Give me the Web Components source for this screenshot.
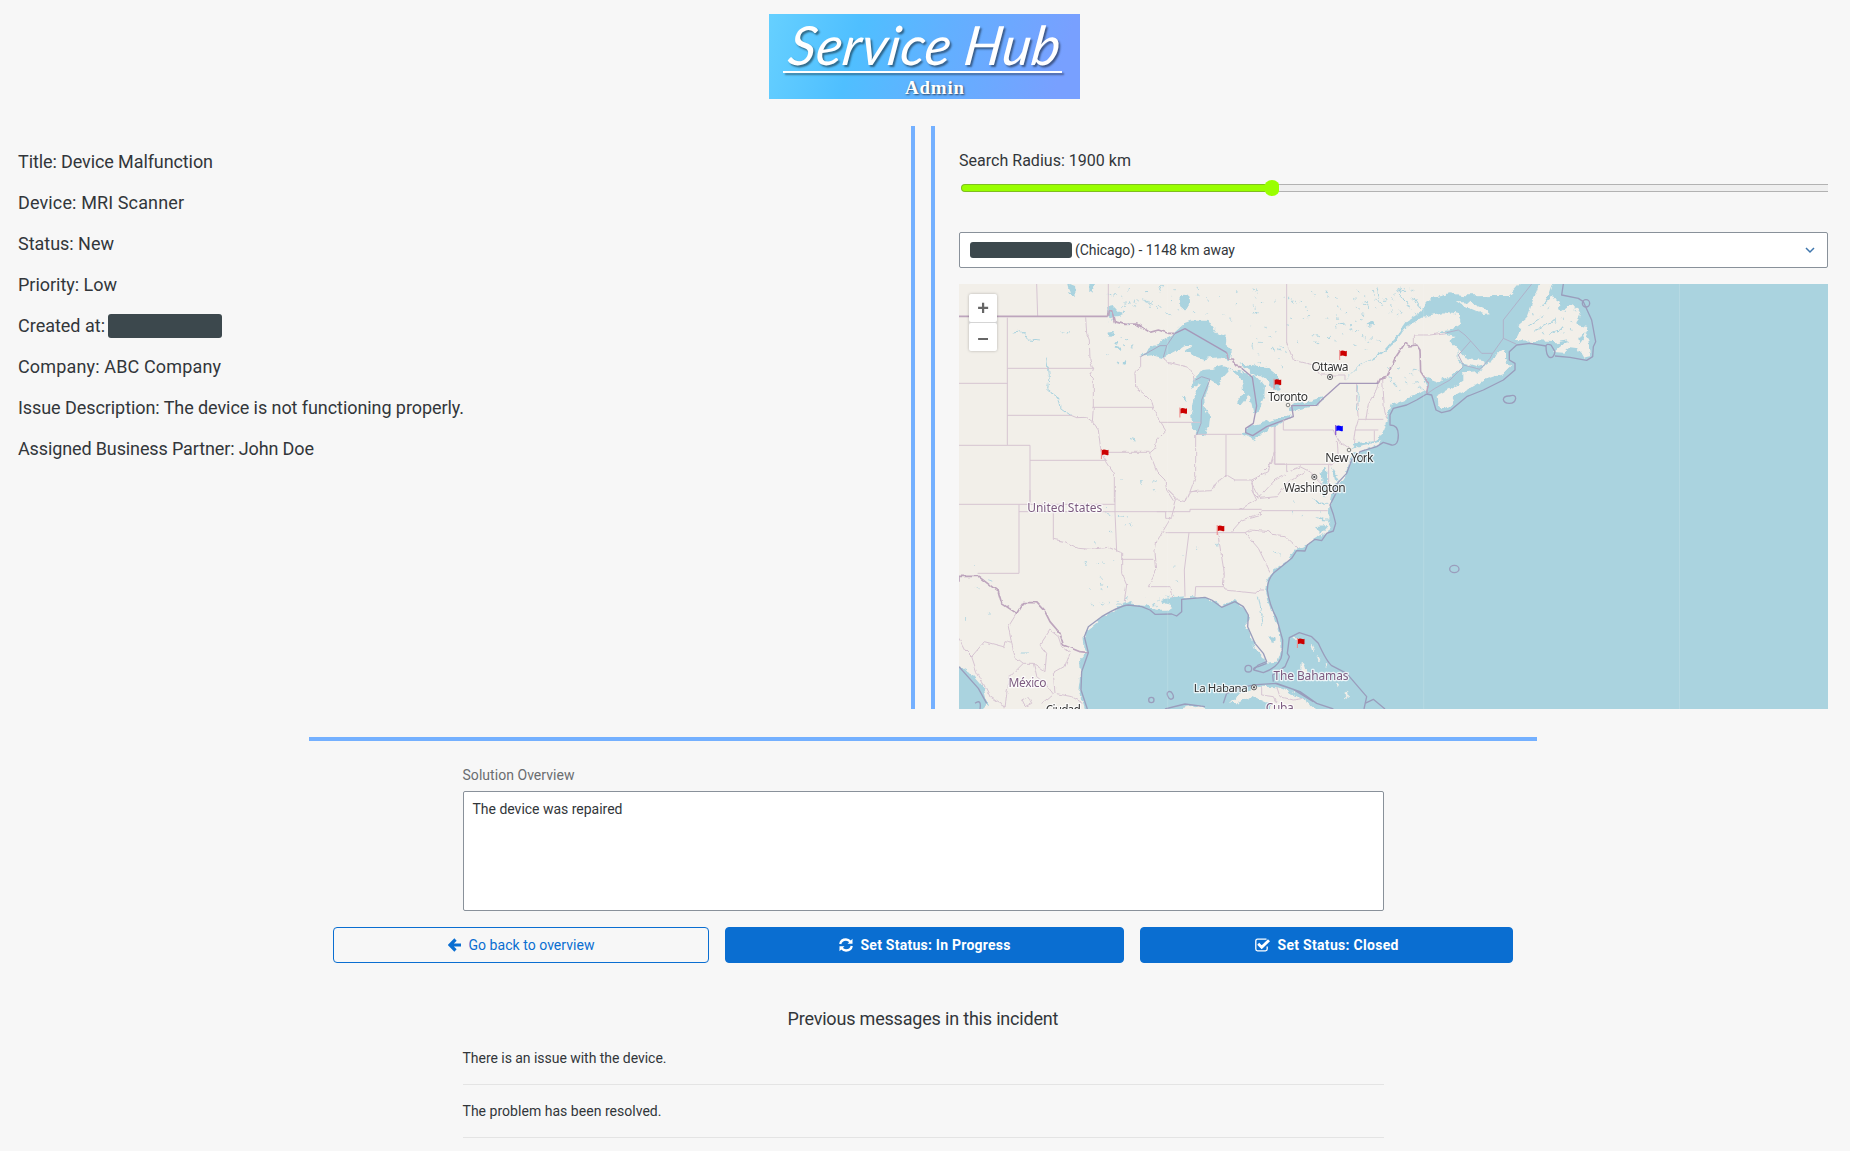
<!DOCTYPE html>
<html lang="en">
<head>
<meta charset="utf-8">
<title>Service Hub Admin</title>
<style>
  body { margin: 0; background: #f7f7f7; color: #32363a; font-family: Roboto, "Liberation Sans", sans-serif; }
</style>
</head>
<body>
<service-page></service-page>

<script>
const define = (name, html, setup) => {
  const template = document.createElement('template');
  template.innerHTML = html;
  customElements.define(name, class extends HTMLElement {
    connectedCallback() {
      if (this.shadowRoot) return;
      this.attachShadow({ mode: 'open' }).append(template.content.cloneNode(true));
      if (setup) setup.call(this, this.shadowRoot);
    }
  });
};

/* A single line of text tracked so that it fills the given width. */
define('fit-text', `<style>:host{display:inline-block;white-space:nowrap;vertical-align:top}span{display:inline-block;vertical-align:top}</style><span><slot></slot></span>`, function (root) {
  const span = root.querySelector('span');
  const want = +this.getAttribute('width');
  const chars = this.textContent.length;
  const natural = span.getBoundingClientRect().width;
  span.style.letterSpacing = ((want - natural) / (chars - 1)).toFixed(3) + 'px';
  this.style.width = want + 'px';
});

define('hub-logo', `
  <style>
    :host{display:flex;flex-direction:column;align-items:center;width:311px;height:85px;color:#fff;overflow:hidden;
      background:linear-gradient(105deg,#66d0ff 0%,#4fbfff 28%,#62b0ff 55%,#78a0ff 92%)}
    .name{font:italic 400 54px/62px Lato,sans-serif;height:57px;text-shadow:2px 2px 2px #0007;transform:skewX(-8deg);margin-left:10px}
    .rule{width:279px;height:3px;background:#fff;box-shadow:2px 2px 2px #0006;margin-right:4px}
    .role{font:bold 19px/22px "Liberation Serif",serif;margin-top:4px;text-shadow:1px 1px 2px #0009;margin-left:20px}
  </style>
  <div class="name"><fit-text width="280">Service Hub</fit-text></div>
  <div class="rule"></div>
  <div class="role"><fit-text width="59">Admin</fit-text></div>`);

define('redacted-box', `
  <style>:host{display:block;background:#3c484d;border-radius:3px}</style>`);

define('incident-details', `
  <style>
    :host{display:flex;flex-direction:column;padding:15px 0 0 18px;font-size:18px;line-height:41px}
    .row{display:flex;align-items:center;height:41px}
    redacted-box{width:114px;height:24px;margin-left:3px}
  </style>
  <div class="row"><fit-text width="195">Title: Device Malfunction</fit-text></div>
  <div class="row"><fit-text width="166">Device: MRI Scanner</fit-text></div>
  <div class="row"><fit-text width="96">Status: New</fit-text></div>
  <div class="row"><fit-text width="99">Priority: Low</fit-text></div>
  <div class="row"><fit-text width="87">Created at:</fit-text><redacted-box></redacted-box></div>
  <div class="row"><fit-text width="203">Company: ABC Company</fit-text></div>
  <div class="row"><fit-text width="446">Issue Description: The device is not functioning properly.</fit-text></div>
  <div class="row"><fit-text width="296">Assigned Business Partner: John Doe</fit-text></div>`);

define('column-divider', `
  <style>:host{display:block;box-sizing:border-box;width:24px;border:solid #74b0ff;border-width:0 4px}</style>`);

define('radius-slider', `
  <style>
    :host{display:block;height:106px;box-sizing:border-box;padding-top:25px;overflow:hidden}
    .label{font-size:16px;line-height:20px;height:20px}
    .bar{display:flex;align-items:center;height:16px;margin:9px -10px 0 2px}
    .fill{box-sizing:border-box;width:304px;height:8px;background:#9f0;border:1px solid #7fbf1f;border-right:0;border-radius:4px 0 0 4px}
    .thumb{width:16px;height:16px;border-radius:50%;background:#9f0;margin-left:-1px}
    .rest{box-sizing:border-box;flex:1;height:8px;background:#efefef;border:1px solid #b2b2b2;border-width:1px 0;margin-left:-1px}
  </style>
  <div class="label"><fit-text width="172">Search Radius: 1900 km</fit-text></div>
  <div class="bar"><div class="fill"></div><div class="thumb"></div><div class="rest"></div></div>`);

define('partner-select', `
  <style>
    :host{display:flex;align-items:center;box-sizing:border-box;height:36px;padding:0 11px 0 10px;background:#fff;border:1px solid #89919a;border-radius:2px;font-size:14px}
    redacted-box{width:102px;height:16px;margin-right:3px}
    svg{margin-left:auto;width:12px;height:8px}
  </style>
  <redacted-box></redacted-box><fit-text width="160">(Chicago) - 1148 km away</fit-text>
  <svg viewBox="0 0 12 8"><path d="M2 2l4 4 4-4" fill="none" stroke="#3f76ad" stroke-width="1.5"/></svg>`);

define('region-map', `
  <style>
    :host{display:block;position:relative;height:425px;overflow:hidden;background:#f2efe9}
    svg{display:block;width:869px;height:425px}
    .zoom{position:absolute;left:10px;top:10px;display:flex;flex-direction:column;gap:1px;border-radius:2px;box-shadow:0 0 3px #0004;background:#d5d5d5}
    .zoom div{width:28px;height:28px;background:#fff;color:#666;font:bold 20px/28px "Liberation Sans",sans-serif;text-align:center;border-radius:2px}
    .water{fill:#aad3df}
    .land{fill:#f2efe9}
    .state{fill:none;stroke:#d6c4d2;stroke-width:3;stroke-linejoin:round}
    .nation{fill:none;stroke:#bda5bd;stroke-width:5;stroke-linejoin:round}
    .sea{fill:none;stroke:#9a9dbc;stroke-width:4;stroke-linejoin:round}
    .river{fill:none;stroke:#aad3df;stroke-width:3}
    text{font:12px "Noto Sans",sans-serif;text-anchor:middle;fill:#333;stroke:#fff;stroke-opacity:.75;stroke-width:2.5px;paint-order:stroke;stroke-linejoin:round}
    text.c{fill:#7c5b80}
    .town{fill:#f5f3ee;stroke:#555;stroke-width:.7}
  </style>
  <svg viewBox="959 284 869 425">
    <defs>
      <filter id="rough" x="0" y="0" width="100%" height="100%"><feTurbulence type="fractalNoise" baseFrequency=".13" numOctaves="3" seed="4"/><feDisplacementMap in="SourceGraphic" scale="7" xChannelSelector="R" yChannelSelector="G"/></filter>
      <filter id="wavy" x="0" y="0" width="100%" height="100%"><feTurbulence type="fractalNoise" baseFrequency=".15" numOctaves="2" seed="9"/><feDisplacementMap in="SourceGraphic" scale="3.5" xChannelSelector="R" yChannelSelector="G"/></filter>
      <g id="flag"><path d="M.4 0V10" stroke="#e88" stroke-width="1"/><path d="M1 1.2Q2.5 0 4.5 .8T7.5 .8V6Q6 6.5 4.5 5.8T1 6z" fill="#c00"/></g>
      <g id="capital"><circle r="2.6" fill="#eee" stroke="#444" stroke-width=".8"/><circle r="1.1" fill="#444"/></g>
    </defs>
    <g filter="url(#rough)">
      <rect x="940" y="270" width="900" height="450" class="land"/>
      <g transform="translate(955 280) scale(.33333)">
        <g class="water">
          <path d="M557 230L590 200 650 165 690 130 710 122 760 122 785 160 815 168 812 195 828 220 822 240 790 232 750 238 715 225 690 215 712 195 690 195 660 215 625 232 600 225z"/>
          <path d="M705 330L715 300 740 270 770 268 800 258 825 265 800 295 790 315 765 300 757 330 748 360 750 385 765 410 762 440 745 465 725 465 713 440 708 400 715 360 735 310z"/>
          <path d="M820 262L860 275 900 285 930 320 928 345 920 370 912 395 895 400 890 375 880 350 860 375 843 370 865 340 862 310 850 285z"/>
          <path d="M850 250L890 256 940 262 970 285 977 325 960 328 938 305 920 290 890 275z"/>
          <path d="M862 462L885 438 955 420 1013 405 1000 420 945 442 930 460 893 478z"/>
          <path d="M336 8L360 18 362 45 345 45zM400 8H420L412 35 400 33zM456 82L475 78 490 95 510 100 490 108 460 112z"/>
          <ellipse cx="687" cy="66" rx="15" ry="22"/><ellipse cx="467" cy="160" rx="12" ry="7"/><ellipse cx="485" cy="190" rx="6" ry="4"/><ellipse cx="513" cy="249" rx="7" ry="5"/><ellipse cx="487" cy="203" rx="9" ry="4"/><ellipse cx="691" cy="356" rx="4" ry="9"/>
        </g>
        <path class="river" d="M172 160L200 155 220 180 255 183M275 230L280 290 275 325 310 350 318 385 350 408M320 157L345 162M525 475L545 480"/>
      </g>
      <g transform="translate(1250 280) scale(.33333)">
        <path class="water" d="M280 305L330 255 400 213 440 168 470 125 520 90 530 70 550 50 600 40 640 46 780 45 820 0H1800V700H245L262 620 285 590 300 540 300 515 315 490 375 483 395 470 405 440 410 420 425 375 470 355 500 345 535 325 520 290 560 305 600 290 640 262 620 240 620 205 600 185 615 168 560 157 600 150 632 130 625 105 580 97 520 110 470 140 430 192 395 222 340 250z"/>
        <path class="water" d="M113 385L135 370 180 362 222 350 208 374 190 378 120 395zM212 575L230 562 234 600 226 660 216 625zM243 560L268 605 252 598zM318 315L324 320 320 360zM350 130L368 124 375 135 362 140z"/>
        <g class="land">
          <path d="M620 63L660 65 700 85 720 103 700 105 660 88 640 75zM563 345L600 325 640 302 640 280 680 277 720 250 740 215 765 208 765 240 784 255 760 280 700 300 650 330 615 350 600 375 580 387 565 375zM623 208L650 235 700 240 705 255 680 262 640 250 622 238zM298 509L340 495 397 484 380 497 340 511 305 520z"/>
          <path d="M870 5L912 5 900 40 870 85 905 52 925 65 930 92 960 72 985 87 992 110 978 130 1012 138 1010 160 985 170 988 190 1008 163 1018 180 1022 225 1000 230 985 205 960 202 940 218 912 216 930 200 962 180 920 187 798 180 813 150 803 135 832 110 850 60z"/>
        </g>
        <path class="river" stroke-width="2" d="M325 345L322 390M490 50L510 85M380 20L390 60M445 25L470 70 480 90M345 60L360 90M255 135L285 128M835 140L880 110M850 155L915 120M900 160L940 145"/>
      </g>
      <g transform="translate(1250 490) scale(.33333)">
        <path class="water" d="M252 -20L240 30 238 50 235 90 245 110 225 128 200 140 175 155 160 175 130 185 115 210 70 240 50 275 45 300 55 340 75 385 90 430 92 480 80 515 50 518 40 500 15 475 0 440 -10 400 -5 375 -30 345 -45 330 -85 350 -110 330 -145 320 -185 318 -235 322 -265 330 -245 345 -230 350 -245 362 -285 362 -315 345 -365 340 -385 345 -415 365 -445 385 -475 410 -500 430 -497 470 -490 485 -510 510 -507 560 -513 610 -500 640 -485 690H1800V-20z"/>
        <path class="water" d="M-900 510L-835 550 -800 590 -778 680H-900zM185 25L235 45 205 42zM200 78L240 92 210 90zM195 108L235 105 215 128zM215 -30L236 -30 225 15 218 10z"/>
        <path class="land" d="M-60 638L-20 605 30 590 80 592 130 610 180 640 215 680H60L60 645 0 618 -40 640zM152 520L162 520 170 545 150 548zM-205 655L-165 645 -130 655 -130 680H-205zM-795 640L-780 650 -770 680 -800 680z"/>
        <path d="M185 460L193 485M205 500L212 515M260 580L270 592M288 605L300 615 285 625M222 520L230 525M130 445L150 450" fill="none" stroke="#f2efe9" stroke-width="5"/>
        <ellipse class="water" cx="66" cy="447" rx="8" ry="8"/>
        <path class="river" d="M25 320L35 370 40 410M72 182L92 198M-685 489H-660M-430 290L-420 303"/>
      </g>
      <g id="ponds"></g>
    </g>
    <g filter="url(#wavy)">
      <g transform="translate(955 280) scale(.33333)">
        <path class="state" d="M392 112L395 160 403 180 405 240 413 265 405 285 415 295V382L412 425 430 450 438 515 455 545 478 580V670M348 406L365 413 395 412 412 425M595 380L590 365 565 340 542 322 540 275 557 260V230M595 380L605 410 615 427 632 455 605 480 600 505 583 520 605 575 630 600 635 630 655 662M460 517H583M625 235L640 247 700 262 715 285 718 305M722 465V590L705 635 690 662M705 635L770 632 780 610 815 585 840 600 890 600 940 575 958 515M890 600L895 640 910 655 960 600 990 585"/>
        <path class="nation" d="M458 109L460 92 470 92 478 125 510 133 545 132 585 157 610 150 640 160 660 160M815 218L820 237 835 237 842 257 860 262"/>
      </g>
      <g transform="translate(1250 280) scale(.33333)">
        <path class="state" d="M110 190L130 240 190 255 210 285H285V300M250 450L256 465 270 485 298 505M262 482L265 540 245 553M320 310V360L325 417 315 450 310 490M385 305L380 330 355 370 348 418M398 298L403 390 410 415M490 195V165L540 165 590 158M110 553V575L150 560 180 575 230 625M75 515L65 550 5 610 30 655 80 650 110 610 165 575"/>
        <path class="nation" d="M385 310L390 298 410 292 435 235 465 190 480 198 500 195 510 210 512 275 535 310 530 340"/>
      </g>
      <g transform="translate(955 490) scale(.33333)">
        <path class="state" d="M295 148L330 155 370 175 410 178 460 172 497 187M500 187V250L515 285 508 335M640 0L665 25 650 80 605 155 600 185 605 240 580 290H645L650 320M788 128L808 250 805 290 810 300 905 310 915 300 930 300M920 62L905 75 860 90 830 125M870 128L910 175 945 245M640 0L670 30 690 35 700 8 730 0M855 58L905 30 890 0M185 370L160 410 170 460 150 455 145 470 88 455 50 500 30 480 12 445M170 460L180 500 205 520 235 520 270 545 275 490 255 465 285 420 310 440 320 470 345 490 330 530 295 550 300 610 350 620 385 640M50 500L65 545 90 590 105 620 150 650M150 655L155 610 165 560 205 520M235 520L245 560 270 580 295 612 260 640M200 630L220 620 230 640 210 650z"/>
        <path class="nation" d="M12 275V259H70L130 305 140 340 185 370 205 338 245 338 270 365 285 395 315 430 325 465 375 485 400 488"/>
      </g>
      <g transform="translate(1250 490) scale(.33333)"><path class="state" d="M0 85L30 78 35 60M-15 128L0 120 60 125 65 133 105 137 145 175M35 590V615L70 620 80 640M80 590L90 620 130 630 160 625"/></g>
    </g>
    <g transform="translate(955 280) scale(.33333)">
      <path class="state" d="M245 12L248 109M460 12V92M157 113V495M157 265H412M12 310H157M157 406H348M12 496H225V672M225 541H455M412 382H595M615 427H738M722 463H860M813 465V590M958 440V552H990"/>
      <path class="state" style="stroke:#a9a8c2" d="M722 300L740 290 765 298 740 360 738 430 725 465M557 230L615 197H635L625 232M635 197L660 160"/>
      <path class="nation" d="M12 109H458"/>
      <path class="nation" style="stroke:#a598b9;stroke-width:4" d="M660 160L690 146 815 218M860 265L892 292 905 378 895 430 872 445 872 458 893 467 935 440 1015 410 1010 377 1085 376 1105 355 1155 310 1270 310"/>
    </g>
    <g transform="translate(1250 280) scale(.33333)">
      <path class="state" d="M110 12V190M100 420V450H250M75 440V553H245M236 555V630M325 418H400M315 450H385M373 452V485"/>
      <path class="sea" style="stroke:#b0b1c9;stroke-width:3" d="M590 158L625 150 645 165 662 183 625 225 640 255 690 268 720 235 728 220 695 220 662 183M728 220L760 175 798 192M760 175V120L845 12M640 260L600 300 555 325 530 342"/>
      <path class="sea" d="M530 342L545 345 558 390 575 398 600 392 650 350 700 330 760 300 795 270 795 250 778 240 778 215 800 195 840 190 888 198Q890 190 903 195L915 215Q912 235 898 232Q888 225 888 198M915 228L960 232 1010 241 1028 230 1030 200 1037 185 1025 120 1000 65 985 55 935 45 940 12M530 342L500 360 470 375 430 385 420 405V435Q445 435 445 465Q445 498 425 495L400 487 380 500 330 515 305 540 290 580 262 610 250 640 258 632"/>
      <g class="sea"><circle cx="1008" cy="70" r="11"/><path d="M760 358Q762 347 778 348Q797 342 797 355Q795 370 778 370Q762 370 760 358z"/></g>
    </g>
    <g transform="translate(1250 490) scale(.33333)">
      <path class="sea" d="M262 2L240 45Q252 75 257 100L250 123 230 130 215 152 195 148 172 165 165 183 140 182 125 205 70 250Q52 270 52 300Q58 345 80 385L98 450Q98 490 93 505Q80 535 40 548L12 540Q8 532 25 530L50 520M70 575L68 555 105 530 118 500 112 490 118 443 148 428 185 440 205 460Q230 515 245 527L290 550 350 620 342 657M345 640L370 628 405 657M-80 640L-70 610 -30 592 20 584 80 580 150 605 200 640 250 657M75 580L130 598 190 635"/>
      <ellipse class="sea" cx="613" cy="237" rx="14" ry="11"/>
    </g>
    <g transform="translate(955 490) scale(.33333)">
      <path class="state" d="M12 43H480M225 0V43M192 43V250H68M192 65H295V148M295 65H480M480 0V65L485 185M480 65H632V85H650M500 208H595M605 65H705V58H920M920 62H1118M632 128H870M702 128L688 240 690 320M720 320L722 290H805"/>
      <path class="sea" d="M397 657L378 600 380 545 400 488 388 440 400 410 440 380Q500 345 520 345L560 350 585 360 600 373 650 372 665 378 680 365 680 328 750 322 770 330 800 352 840 335 865 350 880 375 878 410 900 460 925 490 935 515 910 525 895 540M12 530L70 595 95 640M60 640Q80 625 75 657M630 657L690 642 750 650"/>
      <g class="sea"><circle cx="880" cy="536" r="10"/><circle cx="589" cy="630" r="8"/><ellipse cx="646" cy="616" rx="8" ry="12" transform="rotate(-25 646 616)"/></g>
    </g>
    <path d="M1167.7 284V709M1423.7 284V709M1679.5 284V709" stroke="#fff" stroke-opacity=".14"/>
    <circle class="town" cx="1288" cy="405" r="1.8"/><circle class="town" cx="1349" cy="450" r="1.8"/>
    <use href="#capital" x="1330" y="377"/><use href="#capital" x="1314.3" y="477"/><use href="#capital" x="1254" y="687.3"/>
    <text x="1330" y="371" textLength="37">Ottawa</text>
    <text x="1288" y="401.3" textLength="40">Toronto</text>
    <text x="1349.3" y="462" textLength="48" style="word-spacing:1px">New York</text>
    <text x="1314.7" y="491.7" textLength="62">Washington</text>
    <text class="c" x="1064.7" y="511.6" textLength="75">United States</text>
    <text class="c" x="1027.5" y="686.8" textLength="38">México</text>
    <text x="1220.7" y="691.6" textLength="54" style="font-size:11.5px">La Habana</text>
    <text x="1063.3" y="714" textLength="35">Ciudad</text>
    <text class="c" x="1311" y="679.6" textLength="75">The Bahamas</text>
    <text class="c" x="1279.7" y="712" textLength="28">Cuba</text>
    <use href="#flag" x="1179.5" y="407.5"/><use href="#flag" x="1101" y="449"/><use href="#flag" x="1339.3" y="350"/>
    <use href="#flag" x="1273.7" y="378.7"/><use href="#flag" x="1216.8" y="525"/><use href="#flag" x="1297" y="638"/>
    <g transform="translate(1335.3 425)"><path d="M.4 0V10" stroke="#85c" stroke-width="1.2"/><path d="M1 1.2Q2.5 0 4.5 .8T7.5 .8V6Q6 6.5 4.5 5.8T1 6z" fill="#00f"/></g>
  </svg>
  <div class="zoom"><div>+</div><div>–</div></div>`, root => {
  /* Small inland lakes: [x, y, width, height, count] areas filled from a fixed seed. */
  let seed = 7;
  const rnd = () => (seed = (seed * 16807) % 2147483647) / 2147483647;
  const areas = [[1105, 286, 60, 22, 26], [1165, 286, 75, 35, 16], [1250, 286, 35, 85, 30], [1285, 290, 95, 60, 48], [1370, 288, 50, 28, 26],
    [1105, 320, 35, 50, 9], [1385, 365, 40, 28, 14], [1530, 300, 45, 35, 16], [1085, 540, 30, 50, 10], [1100, 505, 30, 30, 7],
    [1165, 540, 60, 45, 5], [1090, 595, 90, 12, 22], [962, 560, 30, 60, 5], [1120, 480, 50, 14, 5], [1285, 495, 45, 30, 4]];
  let d = '';
  for (const [x, y, w, h, n] of areas) for (let i = 0; i < n; i++) {
    const l = .5 + rnd() * 2.6;
    d += `M${(x + rnd() * w).toFixed(1)} ${(y + rnd() * h).toFixed(1)}l${((rnd() - .3) * l).toFixed(1)} ${((rnd() - .5) * l * 1.6).toFixed(1)} ${(rnd() * l).toFixed(1)} ${(l * .3).toFixed(1)}`;
  }
  root.querySelector('#ponds').innerHTML = `<path d="${d}" fill="none" stroke="#aad3df" stroke-width=".9" stroke-linecap="round"/>`;
});

define('partner-finder', `
  <style>:host{display:block;padding-right:22px}region-map{margin-top:16px}</style>
  <radius-slider></radius-slider><partner-select></partner-select><region-map></region-map>`);

define('solution-field', `
  <style>
    :host{display:block;width:921px;font-size:14px}
    label{display:block;color:#6a6d70;line-height:20px;height:26px}
    .area{box-sizing:border-box;height:120px;background:#fff;border:1px solid #89919a;border-radius:2px;padding:7px 9px;line-height:20px}
  </style>
  <label><fit-text width="112">Solution Overview</fit-text></label>
  <div class="area"><fit-text width="150">The device was repaired</fit-text></div>`);

define('action-button', `
  <style>
    :host{display:flex;align-items:center;justify-content:center;gap:8px;box-sizing:border-box;height:36px;border:1px solid #0a6ed1;border-radius:4px;background:#0a6ed1;color:#fff;font-weight:700;font-size:14px}
    :host([plain]){background:none;color:#0a6ed1;font-weight:400}
    ::slotted(svg){display:block}
  </style>
  <slot name="icon"></slot><slot></slot>`);

define('action-bar', `
  <style>:host{display:grid;grid-template-columns:376px 399px 373px;gap:16px}</style>
  <action-button plain>
    <svg slot="icon" width="13" height="14" viewBox="0 0 13 14"><path d="M7.500 1.500L2 7l5.500 5.500M2.500 7H13" fill="none" stroke="#0a6ed1" stroke-width="3.200"/></svg>
    <fit-text width="126">Go back to overview</fit-text>
  </action-button>
  <action-button>
    <svg slot="icon" width="14" height="14" viewBox="0 0 14 14"><g fill="none" stroke="#fff" stroke-width="2.300"><path d="M1.200 6Q2.200 1.500 7 1.500Q9.500 1.500 11.500 3.700M12.800 8Q11.800 12.500 7 12.500Q4.500 12.500 2.500 10.300"/></g><path d="M13.500 .8V5.800H8.500zM.5 13.200V8.200H5.500z" fill="#fff"/></svg>
    <fit-text width="150">Set Status: In Progress</fit-text>
  </action-button>
  <action-button>
    <svg slot="icon" width="15" height="14" viewBox="0 0 15 14"><path d="M11.500 1.200H2.500Q.8 1.200 .8 3V11Q.8 12.800 2.500 12.800H10.500Q12.200 12.800 12.200 11V8.500" fill="none" stroke="#fff" stroke-width="1.300"/><path d="M3.200 5.800L6.700 9.200 14 2.200" fill="none" stroke="#fff" stroke-width="2.900"/></svg>
    <fit-text width="121">Set Status: Closed</fit-text>
  </action-button>`);

define('message-item', `
  <style>:host{display:block;box-sizing:border-box;height:53px;border-bottom:1px solid #e4e4e4;font-size:14px;line-height:20px;padding-top:16px}</style>
  <slot></slot>`);

define('message-history', `
  <style>
    :host{display:flex;flex-direction:column;align-items:center;width:921px}
    h2{margin:0;font-size:18px;font-weight:400;line-height:24px;height:25px}
    .list{align-self:stretch}
  </style>
  <h2><fit-text width="271">Previous messages in this incident</fit-text></h2>
  <div class="list">
    <message-item><fit-text width="204">There is an issue with the device.</fit-text></message-item>
    <message-item><fit-text width="199">The problem has been resolved.</fit-text></message-item>
  </div>`);

define('service-page', `
  <style>
    :host{display:block;height:1151px;overflow:hidden}
    header{display:flex;justify-content:center;padding:14px 1px 27px 0}
    main{display:grid;grid-template-columns:911px 24px 1fr;column-gap:0;height:583px}
    partner-finder{padding-left:24px}
    .rule{width:1228px;height:4px;background:#74b0ff;margin-top:28px}
    section{display:flex;flex-direction:column;align-items:center;padding-right:4px}
    solution-field{margin-top:24px}
    action-bar{margin-top:16px}
    message-history{margin-top:44px}
  </style>
  <header><hub-logo></hub-logo></header>
  <main><incident-details></incident-details><column-divider></column-divider><partner-finder></partner-finder></main>
  <section>
    <div class="rule"></div>
    <solution-field></solution-field>
    <action-bar></action-bar>
    <message-history></message-history>
  </section>`);
</script>
</body>
</html>
